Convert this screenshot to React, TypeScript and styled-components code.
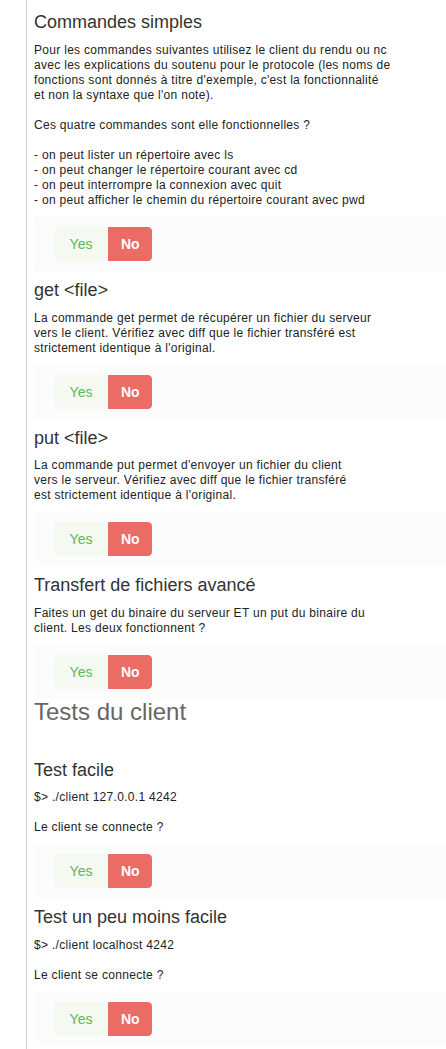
import React from "react";
import styled, { createGlobalStyle } from "styled-components";

const GlobalStyle = createGlobalStyle`
  html, body {
    margin: 0;
    padding: 0;
    background: #ffffff;
    overflow: hidden;
  }
  body {
    font-family: "Liberation Sans", Arial, Helvetica, sans-serif;
    color: #333333;
  }
  * { box-sizing: border-box; }
`;

const Page = styled.div`
  padding-left: 26px;
  min-height: 1049px;
`;

const Column = styled.div`
  border-left: 1px solid #cfcfcf;
  padding: 3px 0 0 7px;
  min-height: 1049px;
  display: flow-root;
`;

const Title = styled.h4`
  margin: 10px 0;
  font-size: 18px;
  line-height: 1.1;
  font-weight: 500;
  color: #333333;
`;

const SectionTitle = styled.h3`
  margin: 0 0 35px;
  font-size: 24px;
  line-height: 1.1;
  font-weight: 400;
  color: #666666;
`;

const Text = styled.p`
  margin: 0 0 9px;
  font-size: 12px;
  line-height: 15px;
  letter-spacing: 0.3px;
  white-space: pre-line;
  color: #222222;
`;

const Panel = styled.div`
  background: #fcfcfc;
  padding: 10px 20px;
  display: flex;
`;

const Group = styled.div`
  display: flex;
`;

const Choice = styled.button<{ $kind: "yes" | "no" }>`
  font-family: "Liberation Sans", Arial, Helvetica, sans-serif;
  font-size: 14px;
  line-height: 20px;
  height: 34px;
  padding: 6px 12px;
  border: 1px solid transparent;
  cursor: pointer;
  font-weight: ${(p) => (p.$kind === "no" ? 700 : 400)};
  color: ${(p) => (p.$kind === "no" ? "#ffffff" : "#62b858")};
  background: ${(p) => (p.$kind === "no" ? "#eb6b65" : "#f4f9f1")};
  border-color: ${(p) => (p.$kind === "no" ? "#eb6b65" : "#f4f9f1")};
  width: ${(p) => (p.$kind === "no" ? "44px" : "54px")};
  border-radius: ${(p) => (p.$kind === "no" ? "0 4px 4px 0" : "4px 0 0 4px")};
`;

type Item = { title: string; text: string };

const simple: Item[] = [
  {
    title: "Commandes simples",
    text:
      "Pour les commandes suivantes utilisez le client du rendu ou nc\navec les explications du soutenu pour le protocole (les noms de\nfonctions sont donnés à titre d'exemple, c'est la fonctionnalité\net non la syntaxe que l'on note).\n\nCes quatre commandes sont elle fonctionnelles ?\n\n- on peut lister un répertoire avec ls\n- on peut changer le répertoire courant avec cd\n- on peut interrompre la connexion avec quit\n- on peut afficher le chemin du répertoire courant avec pwd",
  },
  {
    title: "get <file>",
    text:
      "La commande get permet de récupérer un fichier du serveur\nvers le client. Vérifiez avec diff que le fichier transféré est\nstrictement identique à l'original.",
  },
  {
    title: "put <file>",
    text:
      "La commande put permet d'envoyer un fichier du client\nvers le serveur. Vérifiez avec diff que le fichier transféré\nest strictement identique à l'original.",
  },
  {
    title: "Transfert de fichiers avancé",
    text:
      "Faites un get du binaire du serveur ET un put du binaire du\nclient. Les deux fonctionnent ?",
  },
];

const client: Item[] = [
  {
    title: "Test facile",
    text: "$> ./client 127.0.0.1 4242\n\nLe client se connecte ?",
  },
  {
    title: "Test un peu moins facile",
    text: "$> ./client localhost 4242\n\nLe client se connecte ?",
  },
];

function Question({ item }: { item: Item }) {
  return (
    <>
      <Title>{item.title}</Title>
      <Text>{item.text}</Text>
      <Panel>
        <Group>
          <Choice $kind="yes">Yes</Choice>
          <Choice $kind="no">No</Choice>
        </Group>
      </Panel>
    </>
  );
}

export default function App() {
  return (
    <>
      <GlobalStyle />
      <Page>
        <Column>
          {simple.map((it) => (
            <Question key={it.title} item={it} />
          ))}
          <SectionTitle>Tests du client</SectionTitle>
          {client.map((it) => (
            <Question key={it.title} item={it} />
          ))}
        </Column>
      </Page>
    </>
  );
}
